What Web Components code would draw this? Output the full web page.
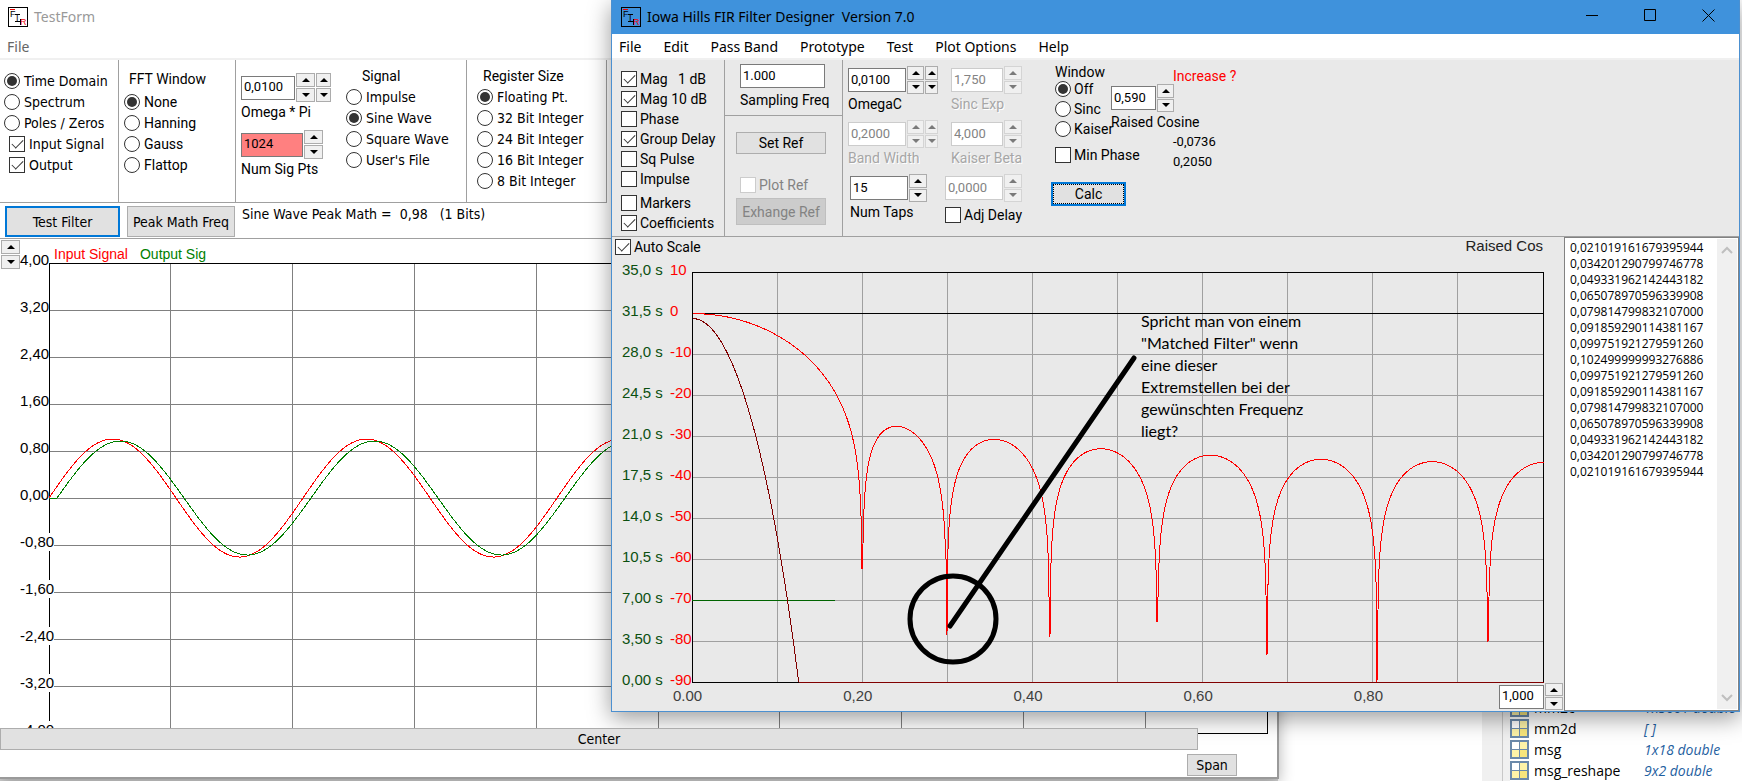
<!DOCTYPE html>
<html lang="en">
<head>
<meta charset="utf-8">
<title>Iowa Hills FIR Filter Designer</title>
<style>
  html, body {
    margin: 0;
    height: 100%;
    overflow: hidden;
    background: #fff;
    color: #000;
  }
  body {
    position: relative;
    --ui: "DejaVu Sans Condensed", "DejaVu Sans", sans-serif;
    --bitmap: Roboto, "Liberation Sans", sans-serif;
    --segoe: "Noto Sans", "Open Sans", sans-serif;
    --arial: "Liberation Sans", Arial, sans-serif;
    font: 14px/16px var(--bitmap);
  }
  /* windows on the desktop */
  .strip {
    position: absolute;
    inset: auto 464px 0 0;
    height: 10px;
    background: #d6d6d6;
  }
  work-space {
    position: absolute;
    top: 697px;
    left: 1482px;
    right: 0;
  }
  test-form {
    position: absolute;
    top: 0;
    left: 0;
    right: 463px;
  }
  fir-designer {
    position: absolute;
    top: 0;
    left: 611px;
    right: 2px;
  }
</style>
</head>
<body>
<div class="strip"></div>
<work-space></work-space>
<test-form></test-form>
<fir-designer></fir-designer>

<script>
const RESET = `
  * { box-sizing: border-box; }
  button, input, textarea { font: inherit; color: inherit; margin: 0; border-radius: 0; }
`;

// Title bar with the FIR icon and, optionally, the window buttons
class TitleBar extends HTMLElement {
  constructor() {
    super();
    this.attachShadow({ mode: 'open' });
  }

  connectedCallback() {
    const controls = this.hasAttribute('controls') ? `
      <button aria-label="Minimize"><svg width="13" height="13"><path d="M0 6.5h12"/></svg></button>
      <button aria-label="Maximize"><svg width="13" height="13"><path d="M.5 .5h11v11h-11z"/></svg></button>
      <button aria-label="Close"><svg width="13" height="13"><path d="M.5 .5l12 12M12.5 .5l-12 12"/></svg></button>` : '';
    this.shadowRoot.innerHTML = `
      <style>
        ${RESET}
        :host { display: flex; align-items: center; height: 34px; padding: 0 2px 0 8px; font: 14px/20px var(--segoe); }
        .icon { flex: none; margin-right: 6px; }
        .icon text { font: 9px var(--arial); }
        span { flex: 1; white-space: pre; }
        button { width: 58px; height: 30px; border: 0; padding: 0; background: none; }
        button path { fill: none; stroke: #000; }
      </style>
      <svg class="icon" width="20" height="20">
        <rect x=".5" y=".5" width="19" height="19" fill="var(--icon-fill, #fff)" stroke="#000"/>
        <path d="M2 2.5h5" stroke="#e00"/>
        <text x="2" y="10">F</text><text x="8" y="14">I</text>
        <path d="M7 7.5h5M7 14.5h5" stroke="#000"/>
        <text x="12" y="18" fill="#e00">R</text>
        <path d="M12.5 12v6" stroke="#000"/>
      </svg>
      <span>${this.getAttribute('caption')}</span>${controls}`;
  }
}
customElements.define('title-bar', TitleBar);

class MenuBar extends HTMLElement {
  constructor() {
    super();
    this.attachShadow({ mode: 'open' });
  }

  connectedCallback() {
    const items = this.getAttribute('items').split('|');
    this.shadowRoot.innerHTML = `
      <style>
        ${RESET}
        :host { display: block; background: #fff; font: 14px/18px var(--segoe); border-bottom: 2px solid #f0f0f0; }
        nav { display: flex; gap: 22px; height: 24px; align-items: flex-end; padding-left: 7px; }
        button { border: 0; padding: 0 0 2px; background: none; white-space: nowrap; }
      </style>
      <nav>${items.map(i => `<button>${i}</button>`).join('')}</nav>`;
  }
}
customElements.define('menu-bar', MenuBar);

// A column of radios or check boxes. "*" in front of an item ticks it, "-" puts space above it
class OptionGroup extends HTMLElement {
  constructor() {
    super();
    this.attachShadow({ mode: 'open' });
  }

  connectedCallback() {
    const type = this.getAttribute('type') || 'checkbox';
    const off = this.hasAttribute('disabled') ? 'disabled' : '';
    const rows = this.getAttribute('items').split('|').map(item => {
      const spaced = item.startsWith('-');
      if (spaced) item = item.slice(1);
      const on = item.startsWith('*');
      if (on) item = item.slice(1);
      return `<label class="${spaced ? 'spaced' : ''}"><input type="${type}" name="group" ${on ? 'checked' : ''} ${off}>${item}</label>`;
    });
    this.shadowRoot.innerHTML = `
      <style>
        ${RESET}
        :host { display: flex; flex-direction: column; gap: var(--gap, 5px); line-height: 16px; }
        :host([disabled]) { color: #838383; }
        label { display: flex; gap: var(--space, 4px); white-space: pre; height: 16px; }
        .spaced { margin-top: 4px; }
        input { appearance: none; flex: none; width: 16px; height: 16px; border: 1px solid #333; background: #fff; display: grid; place-items: center; }
        input:disabled { border-color: #ccc; }
        input[type=radio] { border-radius: 50%; }
        input[type=radio]:checked::before { content: ""; width: 10px; height: 10px; border-radius: 50%; background: #333; }
        input[type=checkbox]:checked::before { content: ""; width: 10px; height: 5px; border: solid #333; border-width: 0 0 1px 1px; transform: rotate(-45deg) translate(1px, -1px); }
      </style>
      ${rows.join('')}`;
  }
}
customElements.define('option-group', OptionGroup);

class SpinArrows extends HTMLElement {
  constructor() {
    super();
    this.attachShadow({ mode: 'open' });
  }

  connectedCallback() {
    const off = this.hasAttribute('disabled') ? 'disabled' : '';
    this.shadowRoot.innerHTML = `
      <style>
        ${RESET}
        :host { display: flex; flex-direction: column; flex: none; gap: 1px; width: var(--w, 18px); height: var(--h, 28px); }
        button { flex: 1; display: grid; place-items: center; padding: 0; border: 1px solid #acacac; background: #f0f0f0; }
        button:disabled { border-color: #d4d4d4; }
        svg { display: block; fill: #000; }
        button:disabled svg { fill: #7a7a7a; }
      </style>
      <button aria-label="Up" ${off}><svg width="8" height="4"><path d="M0 4l4-4 4 4z"/></svg></button>
      <button aria-label="Down" ${off}><svg width="8" height="4"><path d="M0 0l4 4 4-4z"/></svg></button>`;
  }
}
customElements.define('spin-arrows', SpinArrows);

// Edit box with spin arrows (widths in the arrows attribute) and a caption below
class NumberField extends HTMLElement {
  constructor() {
    super();
    this.attachShadow({ mode: 'open' });
  }

  connectedCallback() {
    const off = this.hasAttribute('disabled') ? 'disabled' : '';
    const arrows = (this.getAttribute('arrows') || '').split(',').filter(Boolean)
      .map(w => `<spin-arrows style="--w:${w}px" ${off}></spin-arrows>`).join('');
    const label = this.getAttribute('label');
    this.shadowRoot.innerHTML = `
      <style>
        ${RESET}
        :host { display: inline-flex; flex-direction: column; gap: 2px; flex: none; }
        .row { display: flex; align-items: center; gap: 1px; height: var(--h, 28px); }
        input { width: var(--box, 58px); height: 24px; padding: 0 2px 2px; border: 1px solid #7a7a7a; background: var(--fill, #fff); font-size: 13px; line-height: 18px; }
        input:disabled { border-color: #ccc; color: #838383; }
        label { width: 0; min-width: 100%; white-space: nowrap; line-height: 16px; }
        :host([disabled]) label { color: #a6a6a6; text-shadow: 1px 1px #fff; }
      </style>
      <div class="row"><input id="box" value="${this.getAttribute('value')}" ${off} ${label ? '' : 'aria-label="Value"'}>${arrows}</div>
      ${label ? `<label for="box">${label}</label>` : ''}`;
  }
}
customElements.define('number-field', NumberField);

class PushButton extends HTMLElement {
  constructor() {
    super();
    this.attachShadow({ mode: 'open' });
  }

  connectedCallback() {
    this.shadowRoot.innerHTML = `
      <style>
        ${RESET}
        :host { display: block; flex: none; }
        button { display: block; width: 100%; height: var(--h, 22px); padding: 0; border: 1px solid #adadad; background: #e1e1e1; white-space: nowrap; }
        :host([default]) button { border: 2px solid #0078d7; }
        :host([focus]) button { outline: 1px dotted #000; outline-offset: -3px; }
        button:disabled { background: #ccc; border-color: #bfbfbf; color: #838383; }
      </style>
      <button ${this.hasAttribute('disabled') ? 'disabled' : ''}><slot></slot></button>`;
  }
}
customElements.define('push-button', PushButton);

// Grid of rows x cols cells with the curves of a subclass on top
class PlotGrid extends HTMLElement {
  constructor() {
    super();
    this.attachShadow({ mode: 'open' });
  }

  connectedCallback() {
    const { width, height, cols, rows, line } = this.constructor;
    let grid = '';
    for (let i = 1; i < cols; i++) grid += `M${Math.floor(i * width / cols) + 0.5} 0V${height}`;
    for (let i = 1; i < rows; i++) grid += `M0 ${Math.floor(i * height / rows) + 0.5}H${width}`;
    this.shadowRoot.innerHTML = `
      <style>
        :host { display: block; position: relative; flex: 1; min-width: 0; }
        svg { display: block; width: 100%; height: ${height + 1}px; overflow: hidden; }
        path { fill: none; shape-rendering: crispEdges; vector-effect: non-scaling-stroke; }
        .note { shape-rendering: auto; fill: none; stroke: #000; stroke-width: 5; stroke-linecap: round; }
      </style>
      <svg viewBox="0 0 ${width + 1} ${height + 1}" preserveAspectRatio="none">
        <path d="${grid}" stroke="${line}"/>
        <path d="M.5 .5H${width + 0.5}V${height + 0.5}H.5z" stroke="#000"/>
        ${this.curves()}
      </svg>
      <slot></slot>`;
  }

  curves() {
    return '';
  }
}

class SinePlot extends PlotGrid {
  static width = 1218;
  static height = 470;
  static cols = 10;
  static rows = 10;
  static line = '#808080';

  curves() {
    const wave = (amp, delay) => {
      let d = 'M0 235';
      for (let x = delay; x <= 1218; x += 2) {
        d += `L${x} ${(235 - amp * Math.sin((x - delay) * 2 * Math.PI / 254)).toFixed(1)}`;
      }
      return d;
    };
    return `<path d="${wave(59, 0)}" stroke="#f00"/><path d="${wave(57, 8)}" stroke="#008000"/>`;
  }
}
customElements.define('sine-plot', SinePlot);

const TAPS = [
  '0,021019161679395944', '0,034201290799746778', '0,049331962142443182', '0,065078970596339908',
  '0,079814799832107000', '0,091859290114381167', '0,099751921279591260', '0,102499999993276886',
  '0,099751921279591260', '0,091859290114381167', '0,079814799832107000', '0,065078970596339908',
  '0,049331962142443182', '0,034201290799746778', '0,021019161679395944'
];

class ResponsePlot extends PlotGrid {
  static width = 851;
  static height = 410;
  static cols = 10;
  static rows = 10;
  static line = '#a0a0a0';

  // zero phase response at f (1 = half the sampling rate)
  amplitude(f) {
    return TAPS.reduce((sum, tap, i) => sum + Number(tap.replace(',', '.')) * Math.cos((i - 7) * Math.PI * f), 0);
  }

  // scale is in pixels per dB; depths are the bottoms of the successive notches
  trace(scale, depths) {
    let d = '';
    let last = 1;
    let notch = 0;
    for (let x = 0; x <= 851; x++) {
      const a = this.amplitude(x / 851);
      if (a * last < 0) {
        d += `L${x} ${depths[notch] ?? 410.5}`;
        notch++;
      }
      last = a;
      const floor = Math.min(depths[notch] ?? 410.5, depths[notch - 1] ?? 410.5);
      const y = Math.min(41 - scale * 20 * Math.log10(Math.abs(a)), floor);
      d += `${x ? 'L' : 'M'}${x + 0.5} ${y.toFixed(1)}`;
    }
    return d;
  }

  curves() {
    return `
      <path d="M0 41.5H851" stroke="#000"/>
      <path d="M0 328.5H143" stroke="#006400"/>
      <path d="${this.trace(4.1, [296, 363, 365, 349, 383, 410, 370])}" stroke="#f00"/>
      <path d="${this.trace(41, [])}" stroke="#800000"/>
      <circle class="note" cx="261" cy="347" r="43"/>
      <path class="note" d="M258 354L442 86"/>`;
  }
}
customElements.define('response-plot', ResponsePlot);

class TestForm extends HTMLElement {
  constructor() {
    super();
    this.attachShadow({ mode: 'open' });
  }

  connectedCallback() {
    const scale = ['4,00', '3,20', '2,40', '1,60', '0,80', '0,00', '-0,80', '-1,60', '-2,40', '-3,20', '-4,00'];
    this.shadowRoot.innerHTML = `
      <style>
        ${RESET}
        :host { display: block; background: #fff; border: solid #9a9a9a; border-width: 0 2px 2px 0; box-shadow: 0 4px 14px rgba(0, 0, 0, .3); }
        title-bar { color: #999; }
        menu-bar { color: #666; }
        .ui { font-family: var(--ui); }
        .panels { display: flex; width: 607px; height: 143px; border: solid #a0a0a0; border-width: 0 1px 1px 0; }
        .panel { flex: none; border-right: 1px solid #a0a0a0; padding-top: 8px; }
        .panel:last-child { border: 0; }
        .panel > div { line-height: 16px; white-space: nowrap; }
        .status { display: flex; gap: 7px; height: 36px; padding: 3px 5px; border-bottom: 1px solid #a0a0a0; }
        .status push-button { --h: 31px; }
        .status span { white-space: pre; }
        .legend { display: flex; height: 24px; padding: 1px; font: 14px/16px var(--arial); }
        .legend spin-arrows { --w: 19px; --h: 29px; position: relative; z-index: 2; }
        .legend span { padding: 6px 0 0 12px; }
        .plot { display: flex; padding-right: 9px; }
        .scale { display: grid; grid-auto-rows: 47px; justify-items: start; width: 53px; height: 488px; margin: -12px -4px -6px 0; padding-left: 20px; z-index: 1; font: 15px/18px var(--arial); }
        .scale span { height: 18px; background: #fff; }
        .center { position: relative; z-index: 2; margin: -6px 79px 0 0; }
        .foot { display: flex; justify-content: flex-end; padding: 4px 40px 1px; }
      </style>
      <title-bar caption="TestForm"></title-bar>
      <menu-bar items="File"></menu-bar>
      <div class="panels">
        <div class="panel ui" style="width: 119px; padding: 13px 0 0 4px;">
          <option-group type="radio" items="*Time Domain|Spectrum|Poles / Zeros"></option-group>
          <option-group items="*Input Signal|*Output" style="padding: 5px 0 0 5px;"></option-group>
        </div>
        <div class="panel" style="width: 117px; padding: 11px 0 0 5px;">
          <div style="padding: 0 0 7px 5px;">FFT Window</div>
          <option-group type="radio" items="*None|Hanning|Gauss|Flattop"></option-group>
        </div>
        <div class="panel" style="width: 98px; padding: 13px 0 0 5px; border: 0; display: flex; flex-direction: column; gap: 10px;">
          <number-field value="0,0100" arrows="19,15" label="Omega * Pi" style="--box: 54px; --h: 29px;"></number-field>
          <number-field value="1024" arrows="19" label="Num Sig Pts" style="--box: 62px; --h: 29px; --fill: #ff8080;"></number-field>
        </div>
        <div class="panel" style="width: 133px; padding-left: 12px;">
          <div style="padding: 0 0 5px 16px;">Signal</div>
          <option-group class="ui" type="radio" items="Impulse|*Sine Wave|Square Wave|User's File"></option-group>
        </div>
        <div class="panel" style="padding-left: 10px;">
          <div style="padding: 0 0 5px 6px;">Register Size</div>
          <option-group class="ui" type="radio" items="*Floating Pt.|32 Bit Integer|24 Bit Integer|16 Bit Integer|8 Bit Integer"></option-group>
        </div>
      </div>
      <div class="status ui">
        <push-button default style="width: 115px;">Test Filter</push-button>
        <push-button style="width: 108px;">Peak Math Freq</push-button>
        <span>Sine Wave Peak Math =  0,98   (1 Bits)</span>
      </div>
      <div class="legend">
        <spin-arrows></spin-arrows>
        <span style="color: #f00; padding-left: 34px;">Input Signal</span>
        <span style="color: #008000;">Output Sig</span>
      </div>
      <div class="plot">
        <div class="scale">${scale.map(s => `<span>${s}</span>`).join('')}</div>
        <sine-plot></sine-plot>
      </div>
      <push-button class="center ui">Center</push-button>
      <div class="foot ui"><push-button style="width: 50px;">Span</push-button></div>`;
  }
}
customElements.define('test-form', TestForm);

class FirDesigner extends HTMLElement {
  constructor() {
    super();
    this.attachShadow({ mode: 'open' });
  }

  connectedCallback() {
    const delay = ['35,0', '31,5', '28,0', '24,5', '21,0', '17,5', '14,0', '10,5', '7,00', '3,50', '0,00'];
    const gain = ['10', '0', '-10', '-20', '-30', '-40', '-50', '-60', '-70', '-80', '-90'];
    const scale = delay.map((s, i) => `<span>${s} s</span><b>${gain[i]}</b>`).join('');
    this.shadowRoot.innerHTML = `
      <style>
        ${RESET}
        :host { display: block; background: #e9e9e9; border: 1px solid #4c90d0; border-top: 0; box-shadow: 0 6px 22px rgba(0, 0, 0, .4); }
        title-bar { background: #3f92dc; --icon-fill: #3f92dc; padding-left: 9px; }
        .tools { display: flex; height: 177px; border-bottom: 1px solid #a0a0a0; }
        .col { flex: none; display: flex; flex-direction: column; }
        .lined { border-right: 1px solid #a0a0a0; }
        .ref { width: 118px; }
        .ref > div { padding-left: 15px; }
        .fields { gap: 8px; padding-top: 6px; }
        .right { align-items: flex-end; }
        .body { display: flex; align-items: stretch; }
        .chart { flex: 1; min-width: 0; font: 15px/18px var(--arial); }
        .head { display: flex; justify-content: space-between; height: 35px; padding: 2px 21px 0 3px; font: 14px/16px var(--bitmap); }
        .head span { font: 15px/14px var(--arial); color: #222; }
        .plot { display: flex; padding-right: 20px; }
        .scale { flex: none; width: 80px; height: 450px; margin: -11px 0 -28px; padding-left: 10px; display: grid; grid-template-columns: 48px 1fr; grid-auto-rows: 41px; white-space: nowrap; color: #0b5010; }
        .scale b { font-weight: normal; color: #f00; }
        .axis { display: flex; align-items: flex-start; height: 28px; padding: 0 1px 0 61px; color: #404040; }
        .axis > div { flex: 1; display: grid; grid-template-columns: repeat(5, 1fr); padding-top: 4px; margin-right: -25px; }
        .axis > number-field { position: relative; color: #000; --box: 45px; --h: 27px; font: 14px/16px var(--bitmap); }
        .note { position: absolute; top: 38px; left: 449px; margin: 0; font: 16px/22px Lato, Carlito, sans-serif; }
        .list { flex: none; display: flex; width: 175px; border: 1px solid #828282; background: #fff; }
        textarea { flex: 1; min-width: 0; border: 0; padding: 2px 0 0 5px; resize: none; overflow: hidden; outline: 0; background: #fff; font: 12px/16px "Open Sans", sans-serif; }
        .scroll { flex: none; width: 20px; margin: 1px; background: #f0f0f0; display: flex; flex-direction: column; justify-content: space-between; align-items: center; padding: 7px 0; }
        .scroll path { fill: none; stroke: #bfbfbf; stroke-width: 2; }
      </style>
      <title-bar controls caption="Iowa Hills FIR Filter Designer  Version 7.0"></title-bar>
      <menu-bar items="File|Edit|Pass Band|Prototype|Test|Plot Options|Help"></menu-bar>
      <div class="tools">
        <div class="col lined" style="width: 113px; padding: 11px 0 0 9px;">
          <option-group style="--gap: 4px; --space: 3px;" items="*Mag   1 dB|*Mag 10 dB|Phase|*Group Delay|Sq Pulse|Impulse|-Markers|*Coefficients"></option-group>
        </div>
        <div class="col lined ref">
          <div style="padding-top: 2px; height: 56px; border-bottom: 1px solid #a0a0a0;">
            <number-field value="1.000" label="Sampling Freq" style="--box: 85px;"></number-field>
          </div>
          <div style="padding: 16px 0 0 11px; width: 101px;">
            <push-button>Set Ref</push-button>
            <option-group disabled items="Plot Ref" style="padding: 23px 0 5px 4px; --space: 3px;"></option-group>
            <push-button disabled style="--h: 27px;">Exhange Ref</push-button>
          </div>
        </div>
        <div class="col fields" style="padding-left: 5px; width: 98px; align-items: flex-start;">
          <number-field value="0,0100" arrows="17,13" label="OmegaC"></number-field>
          <number-field disabled value="0,2000" arrows="17,13" label="Band Width"></number-field>
          <number-field value="15" arrows="18" label="Num Taps" style="margin-left: 2px;"></number-field>
        </div>
        <div class="col fields right" style="width: 81px;">
          <number-field disabled value="1,750" arrows="18" label="Sinc Exp" style="--box: 52px;"></number-field>
          <number-field disabled value="4,000" arrows="18" label="Kaiser Beta" style="--box: 52px;"></number-field>
          <div class="col" style="gap: 5px; width: 77px;">
            <number-field disabled value="0,0000" arrows="18"></number-field>
            <option-group items="Adj Delay" style="--space: 3px;"></option-group>
          </div>
        </div>
        <div class="col" style="width: 89px; padding: 4px 0 0 29px;">
          <div style="padding: 0 0 1px 4px;">Window</div>
          <option-group type="radio" items="*Off|Sinc|Kaiser" style="--gap: 4px; --space: 3px; padding-left: 4px;"></option-group>
          <option-group items="Min Phase" style="--space: 3px; padding: 10px 0 19px 4px; width: 100px;"></option-group>
          <push-button default focus style="width: 75px; --h: 24px;">Calc</push-button>
        </div>
        <div class="col" style="padding: 8px 0 0;">
          <div style="padding-left: 62px; color: #f00;">Increase ?</div>
          <number-field value="0,590" arrows="17" label="Raised Cosine" style="--box: 45px;"></number-field>
          <div style="padding: 2px 0 0 62px; font-size: 13px; line-height: 20px;">-0,0736<br>0,2050</div>
        </div>
      </div>
      <div class="body">
        <div class="chart">
          <div class="head">
            <option-group items="*Auto Scale" style="--space: 3px;"></option-group>
            <span>Raised Cos</span>
          </div>
          <div class="plot">
            <div class="scale">${scale}</div>
            <response-plot>
              <p class="note" lang="de">Spricht man von einem<br>"Matched Filter" wenn<br>eine dieser<br>Extremstellen bei der<br>gewünschten Frequenz<br>liegt?</p>
            </response-plot>
          </div>
          <div class="axis">
            <div><span>0.00</span><span>0,20</span><span>0,40</span><span>0,60</span><span>0,80</span></div>
            <number-field value="1,000" arrows="18"></number-field>
          </div>
        </div>
        <div class="list">
          <textarea readonly aria-label="Coefficients">${TAPS.join('\n')}</textarea>
          <div class="scroll">
            <svg width="12" height="8"><path d="M1 7l5-5 5 5"/></svg>
            <svg width="12" height="8"><path d="M1 1l5 5 5-5"/></svg>
          </div>
        </div>
      </div>`;
  }
}
customElements.define('fir-designer', FirDesigner);

// Variable list of the program behind the two windows
class WorkSpace extends HTMLElement {
  constructor() {
    super();
    this.attachShadow({ mode: 'open' });
  }

  connectedCallback() {
    const vars = [['mm2c', '1x5001 double'], ['mm2d', '[ ]'], ['msg', '1x18 double'], ['msg_reshape', '9x2 double'], ['', '']];
    const icon = `
      <svg width="19" height="19">
        <rect x="1" y="1" width="17" height="17" fill="#fdf3a8" stroke="#6a89aa" stroke-width="2"/>
        <path d="M2 2h7v7H2z" fill="#fff"/><path d="M10 10h7v7h-7z" fill="#f8e67c"/>
        <path d="M9.5 1v17M1 9.5h17" stroke="#6a89aa"/>
      </svg>`;
    this.shadowRoot.innerHTML = `
      <style>
        :host { display: block; background: linear-gradient(90deg, #f0f0f0 20px, #c8c8c8 20px, #c8c8c8 21px, #f0f0f0 21px, #f0f0f0 28px, #fff 28px); font: 14px/21px "Open Sans", sans-serif; }
        table { border-collapse: collapse; margin-left: 28px; white-space: nowrap; }
        td { padding: 0; height: 21px; }
        td:first-child { width: 24px; }
        td:nth-child(2) { width: 110px; }
        td:last-child { color: #1f5f9f; font-style: italic; }
        svg { display: block; }
      </style>
      <table>${vars.map(([n, v]) => `<tr><td>${icon}</td><td>${n}</td><td>${v}</td></tr>`).join('')}</table>`;
  }
}
customElements.define('work-space', WorkSpace);
</script>
</body>
</html>
